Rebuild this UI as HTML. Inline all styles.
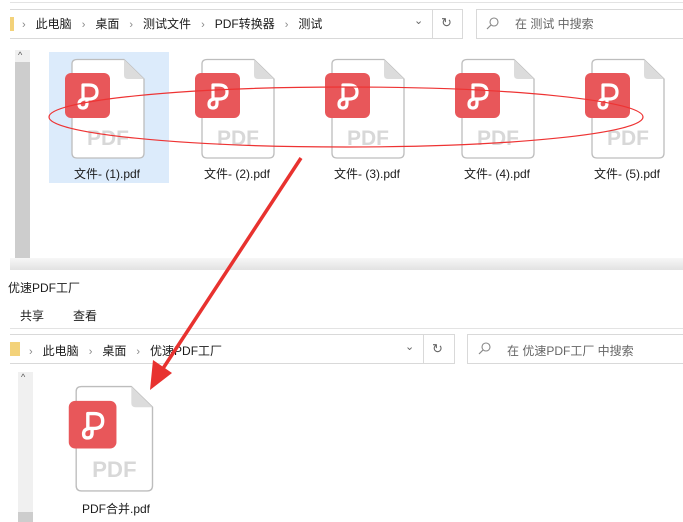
<!DOCTYPE html>
<html><head><meta charset="utf-8"><style>
*{margin:0;padding:0;box-sizing:border-box}
body{width:683px;height:522px;background:#fff;position:relative;overflow:hidden;font-family:"Liberation Sans","Noto Sans CJK SC",sans-serif;font-size:12px;color:#1a1a1a}
.a{position:absolute}
.bc{position:absolute;white-space:nowrap;font-size:12px}
.chev{color:#888;font-size:11px}
</style></head><body>
<svg width="0" height="0" style="position:absolute"><defs>
<g id="pdf">
<path d="M8 0.5 H55 L75 20 V94 Q75 99 70 99 H8 Q3 99 3 94 V5 Q3 0.5 8 0.5Z" fill="#fff" stroke="#bdbdbd" stroke-width="1.3"/>
<path d="M55 0.5 V16 Q55 20 59 20 H75Z" fill="#dcdcdc"/>
<text x="39" y="86" text-anchor="middle" font-family="Liberation Sans,sans-serif" font-weight="bold" font-size="21" fill="#d8d8d8">PDF</text>
<rect x="-4" y="14" width="45" height="45" rx="6" fill="#e8575a"/>
<path d="M14 26 V40 M14 26 H20 Q28 26 28 33 Q28 40 20 40 H15 Q10 41 10 45 Q10 49 14 49 Q18 49 18 44 V41" fill="none" stroke="#fff" stroke-width="3.2" stroke-linecap="round" stroke-linejoin="round"/>
</g>
<g id="srch"><circle cx="8" cy="5" r="4" fill="none" stroke="#888" stroke-width="1.1"/><line x1="5" y1="8" x2="1" y2="12" stroke="#888" stroke-width="1.2"/></g>
</defs></svg>

<!-- top window -->
<div class="a" style="left:10px;top:2px;width:673px;height:1px;background:#e3e3e3"></div>
<div class="a" style="left:10px;top:9px;width:453px;height:30px;border:1px solid #d9d9d9;border-left:none"></div>
<div class="a" style="left:10px;top:17px;width:4px;height:14px;background:#f3d27a"></div>
<div class="bc" style="left:22px;top:15px"><span class="chev">›</span>&nbsp;&nbsp; 此电脑 &nbsp;&nbsp;<span class="chev">›</span>&nbsp;&nbsp; 桌面 &nbsp;&nbsp;<span class="chev">›</span>&nbsp;&nbsp; 测试文件 &nbsp;&nbsp;<span class="chev">›</span>&nbsp;&nbsp; PDF转换器 &nbsp;&nbsp;<span class="chev">›</span>&nbsp;&nbsp; 测试</div>
<div class="a" style="left:414px;top:14px;color:#666;font-size:11px">⌄</div>
<div class="a" style="left:432px;top:9px;width:1px;height:30px;background:#d9d9d9"></div>
<div class="a" style="left:441px;top:15px;color:#666;font-size:13px">↻</div>
<div class="a" style="left:476px;top:9px;width:210px;height:30px;border:1px solid #d9d9d9"></div>
<svg class="a" style="left:486px;top:17px" width="14" height="14"><use href="#srch"/></svg>
<div class="bc" style="left:515px;top:15px;color:#666">在 测试 中搜索</div>
<div class="a" style="left:15px;top:50px;width:15px;height:212px;background:#f0f0f0"></div>
<div class="a" style="left:15px;top:62px;width:15px;height:200px;background:#cdcdcd"></div>
<div class="a" style="left:18px;top:50px;font-size:9px;color:#555">^</div>
<div class="a" style="left:49px;top:52px;width:120px;height:131px;background:#dcebfb"></div>
<svg class="a" style="left:69px;top:59px" width="80" height="100" overflow="visible"><use href="#pdf"/></svg>
<svg class="a" style="left:199px;top:59px" width="80" height="100" overflow="visible"><use href="#pdf"/></svg>
<svg class="a" style="left:329px;top:59px" width="80" height="100" overflow="visible"><use href="#pdf"/></svg>
<svg class="a" style="left:459px;top:59px" width="80" height="100" overflow="visible"><use href="#pdf"/></svg>
<svg class="a" style="left:589px;top:59px" width="80" height="100" overflow="visible"><use href="#pdf"/></svg>
<div class="bc" style="left:74px;top:165px">文件- (1).pdf</div>
<div class="bc" style="left:204px;top:165px">文件- (2).pdf</div>
<div class="bc" style="left:334px;top:165px">文件- (3).pdf</div>
<div class="bc" style="left:464px;top:165px">文件- (4).pdf</div>
<div class="bc" style="left:594px;top:165px">文件- (5).pdf</div>
<div class="a" style="left:10px;top:258px;width:673px;height:12px;background:linear-gradient(#f7f7f7,#e2e2e2)"></div>

<!-- bottom window -->
<div class="bc" style="left:8px;top:279px">优速PDF工厂</div>
<div class="bc" style="left:20px;top:307px">共享</div>
<div class="bc" style="left:73px;top:307px">查看</div>
<div class="a" style="left:10px;top:328px;width:673px;height:1px;background:#e3e3e3"></div>
<div class="a" style="left:10px;top:334px;width:445px;height:30px;border:1px solid #d9d9d9;border-left:none"></div>
<div class="a" style="left:10px;top:342px;width:10px;height:14px;background:#f3d27a"></div>
<div class="bc" style="left:29px;top:342px"><span class="chev">›</span>&nbsp;&nbsp; 此电脑 &nbsp;&nbsp;<span class="chev">›</span>&nbsp;&nbsp; 桌面 &nbsp;&nbsp;<span class="chev">›</span>&nbsp;&nbsp; 优速PDF工厂</div>
<div class="a" style="left:405px;top:340px;color:#666;font-size:11px">⌄</div>
<div class="a" style="left:423px;top:334px;width:1px;height:30px;background:#d9d9d9"></div>
<div class="a" style="left:432px;top:341px;color:#666;font-size:13px">↻</div>
<div class="a" style="left:467px;top:334px;width:220px;height:30px;border:1px solid #d9d9d9"></div>
<svg class="a" style="left:478px;top:342px" width="14" height="14"><use href="#srch"/></svg>
<div class="bc" style="left:507px;top:342px;color:#666">在 优速PDF工厂 中搜索</div>
<div class="a" style="left:18px;top:372px;width:15px;height:150px;background:#f0f0f0"></div>
<div class="a" style="left:21px;top:372px;font-size:9px;color:#555">^</div>
<div class="a" style="left:18px;top:512px;width:15px;height:10px;background:#cdcdcd"></div>
<svg class="a" style="left:73px;top:386px" width="84" height="108" overflow="visible"><g transform="scale(1.06)"><use href="#pdf"/></g></svg>
<div class="bc" style="left:82px;top:500px">PDF合并.pdf</div>

<!-- annotations -->
<svg class="a" style="left:0;top:0" width="683" height="522">
<ellipse cx="346" cy="117" rx="297" ry="30" fill="none" stroke="#e33" stroke-width="1.2"/>
<line x1="301" y1="158" x2="162" y2="370" stroke="#e8322f" stroke-width="3.5"/>
<polygon points="150,390 153,360 172,373" fill="#e8322f"/>
</svg>
</body></html>
